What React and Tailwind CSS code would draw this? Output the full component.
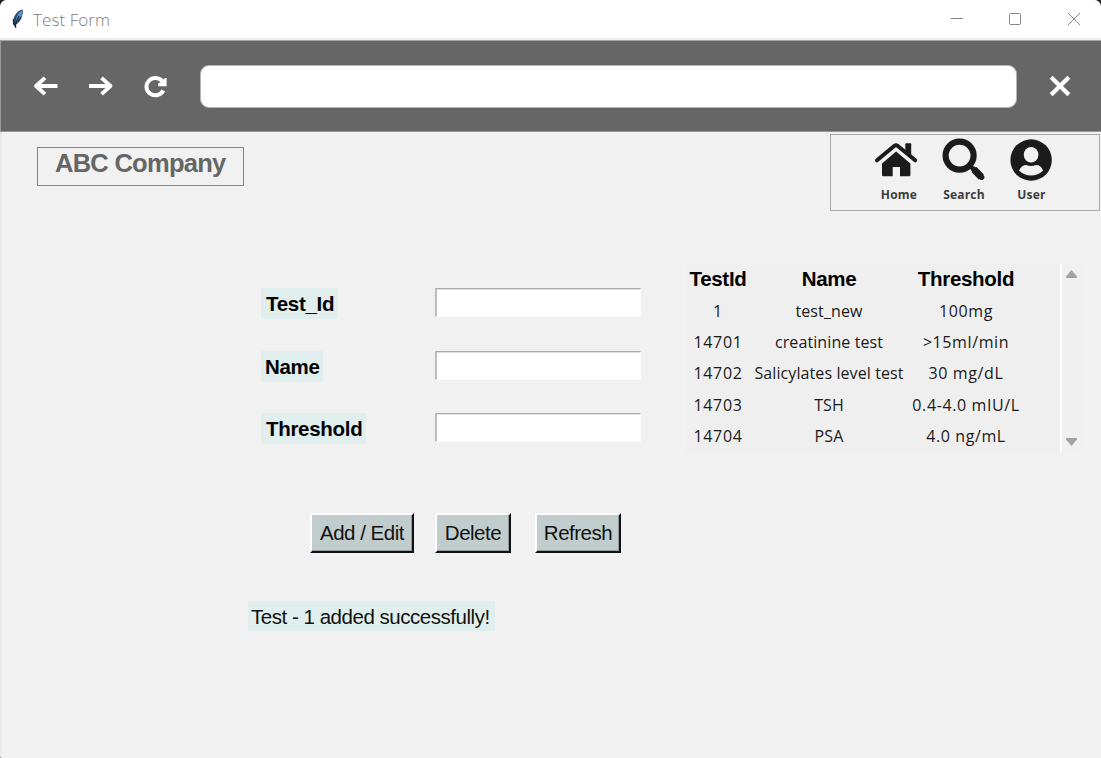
import React from "react";

const arial = "font-['Liberation_Sans',Arial,sans-serif]";
const segoe = "font-['Open_Sans','Noto_Sans',sans-serif]";

function TitleBar() {
  return (
    <header className="flex h-[38px] shrink-0 items-center bg-white">
      <svg className="ml-[11px] h-5 w-[14px]" viewBox="0 0 14 20" fill="none">
        <path d="M2.5 16C1 9 5 2 11.5 0.5C13 4 10 12 6 15L4.5 16L5 19Z" fill="#2c4a6a" />
        <path d="M5 13C5 8 7 3 11 1.5C11.5 7 9.5 11 6.5 14Z" fill="#5592d3" />
        <path d="M4.8 19L4.4 15L8 7M2.3 10L2.5 15.5M10 8L7 13" stroke="#151b25" strokeWidth="1.1" />
      </svg>
      <span className={`${segoe} ml-[8px] pt-[1px] text-[17px] font-light leading-6 text-[#7c7c7c] tracking-[0.08px]`}>Test Form</span>
      <div className="ml-auto flex items-center pr-[20px]">
        <svg className="h-[14px] w-[14px]" viewBox="0 0 14 14" stroke="#858585"><path d="M1 6.5H13" /></svg>
        <svg className="ml-[44px] h-[14px] w-[14px]" viewBox="0 0 14 14" fill="none" stroke="#858585"><rect x="1.5" y="1.5" width="11" height="11" rx="1" /></svg>
        <svg className="ml-[45px] h-[14px] w-[14px]" viewBox="0 0 14 14" stroke="#858585"><path d="M1 1L13 13M13 1L1 13" /></svg>
      </div>
    </header>
  );
}

function Toolbar() {
  return (
    <div className="flex h-[92px] shrink-0 items-center border-y border-l border-b-[#989898] border-l-[#999] border-t-[#a6a6a6] bg-[#666]">
      <svg className="ml-[31px] h-6 w-7" viewBox="0 0 28 24" fill="none" stroke="#fff" strokeWidth="3.8">
        <path d="M25.5 12H4M13 3.8L4 12L13 20.2" strokeLinejoin="round" />
      </svg>
      <svg className="ml-[26px] h-6 w-7" viewBox="0 0 28 24" fill="none" stroke="#fff" strokeWidth="3.8">
        <path d="M3 12H24M15.5 3.8L24.5 12L15.5 20.2" strokeLinejoin="round" />
      </svg>
      <svg className="ml-[28px] h-6 w-[26px]" viewBox="0 0 26 24" fill="none" stroke="#fff">
        <path d="M21.3 16.5A8.9 8.6 0 1 1 20.5 7.5" strokeWidth="4" />
        <path d="M24.6 4V12.2H16V9.5L21 7L22.5 4Z" fill="#fff" stroke="none" />
      </svg>
      <div className="ml-[32px] mt-px h-[43px] w-[817px] rounded-[9px] border border-[#b5b5b5] bg-white" />
      <svg className="ml-[31px] h-6 w-6" viewBox="0 0 24 24" stroke="#fff" strokeWidth="4.2">
        <path d="M3.2 3.2L20.8 20.8M20.8 3.2L3.2 20.8" />
      </svg>
    </div>
  );
}

function HomeIcon() {
  return (
    <svg className="h-[50px] w-[60px]" viewBox="0 0 60 50" fill="#1b1b1b">
      <path d="M9 26.3L26.5 11.8Q28 10.6 29.5 11.8L47.2 26.3" fill="none" stroke="#1b1b1b" strokeWidth="4" strokeLinecap="round" />
      <path d="M37.3 10.2Q37.3 9.3 38.2 9.3H42.3Q43.2 9.3 43.2 10.2V22.5L37.3 17.8Z" />
      <path d="M28.1 17.6L42.4 29.4V41Q42.4 42.3 41.2 42.3H32V33H24.7V42.3H15.3Q14 42.3 14 41V29.4Z" />
    </svg>
  );
}

function SearchIcon() {
  return (
    <svg className="h-[50px] w-[60px]" viewBox="0 0 60 50" fill="none" stroke="#1b1b1b">
      <circle cx="24.6" cy="21.6" r="14" strokeWidth="6.2" />
      <path d="M34 31L38 35" strokeWidth="4" />
      <path d="M39 35.5L46.3 43" strokeWidth="7" />
      <path d="M39 35.5L46.6 43.2" strokeWidth="5.5" strokeLinecap="round" />
    </svg>
  );
}

function UserIcon() {
  return (
    <svg className="h-[50px] w-[60px]" viewBox="0 0 60 50">
      <circle cx="29.1" cy="26" r="20.7" fill="#1b1b1b" />
      <ellipse cx="29.1" cy="20.7" rx="7.3" ry="7.7" fill="#f1f1f1" />
      <path d="M17 36.4Q20 31 24 31Q29 33 34.2 31Q38.5 31 41.2 36.4Q36 41.5 29.1 41.5T17 36.4Z" fill="#f1f1f1" />
    </svg>
  );
}

function Nav() {
  return (
    <nav className="mr-px mt-[2px] flex h-[77px] w-[270px] gap-[7px] border border-[#a9a9a9] pl-[37px] font-['Open_Sans',sans-serif] text-[12px] font-bold leading-4 tracking-[0.2px] text-[#3c3c3c]">
      <div className="-mt-px flex w-[60px] flex-col items-center">
        <HomeIcon />
        <span className="ml-[2px] mt-[3px]">Home</span>
      </div>
      <div className="-mt-px flex w-[60px] flex-col items-center">
        <SearchIcon />
        <span className="mr-[2px] mt-[3px]">Search</span>
      </div>
      <div className="-mt-px flex w-[60px] flex-col items-center">
        <UserIcon />
        <span className="mr-[1px] mt-[3px]">User</span>
      </div>
    </nav>
  );
}

const fields = [
  ["Test_Id", "w-[77px] pl-[5px]"],
  ["Name", "w-[62px] pl-[4px]"],
  ["Threshold", "w-[105px] pl-[5px]"],
];

const buttons = [
  ["Add / Edit", "w-[104px]"],
  ["Delete", "ml-[21px] w-[76px]"],
  ["Refresh", "ml-[24px] w-[86px]"],
];

const rows = [
  ["1", "test_new", "100mg"],
  ["14701", "creatinine test", ">15ml/min"],
  ["14702", "Salicylates level test", "30 mg/dL"],
  ["14703", "TSH", "0.4-4.0 mIU/L"],
  ["14704", "PSA", "4.0 ng/mL"],
];

const cellTracking = ["tracking-[0.65px]", "tracking-[0.1px]", "tracking-[0.6px]"];

function Form() {
  return (
    <section className="ml-[246px] w-[395px] pt-[77px] text-[20.5px]">
      <div className="flex flex-col gap-[31.5px] pl-[13px]">
        {fields.map(([label, size]) => (
          <div key={label} className="flex h-[31px] items-start">
            <div className="w-[174px]">
              <label className={`${size} block h-[31px] bg-[#e0eeed] font-bold leading-[32px] tracking-[-0.3px] text-black`}>{label}</label>
            </div>
            <input aria-label={label} className="h-[29px] w-[206px] border-b border-l-2 border-r border-t border-b-[#fafafa] border-l-[#bcbcbc] border-r-[#fafafa] border-t-[#a8a8a8] bg-white shadow-[inset_0_1px_0_#e2e2e2] outline-none" />
          </div>
        ))}
      </div>
      <div className="mt-[69px] ml-[62px] flex">
        {buttons.map(([label, size]) => (
          <button key={label} className={`${size} h-[40px] whitespace-nowrap border-2 border-b-[#111] border-l-white border-r-[#111] border-t-white bg-[#c1cdcd] pb-[1px] text-center leading-[35px] tracking-[-0.5px] text-[#111] shadow-[inset_-1px_-1px_0_#939d9d]`}>{label}</button>
        ))}
      </div>
      <div className="mt-[48px] h-[30px] w-[247px] whitespace-nowrap bg-[#e0eeed] pl-[3px] leading-[31px] tracking-[-0.47px] text-[#111]">Test - 1 added successfully!</div>
    </section>
  );
}

function ResultTable() {
  return (
    <section className="ml-[43px] mt-[53px] flex h-[188px] w-[396px] bg-[#efefef]">
      <table className={`${segoe} h-[188px] w-[338px] table-fixed border-collapse text-center text-[16px] text-[#1a1a1a]`}>
        <colgroup>
          <col className="w-[64px]" />
          <col className="w-[158px]" />
          <col className="w-[116px]" />
        </colgroup>
        <thead>
          <tr className={`${arial} h-[32px] text-[20.5px] leading-6 tracking-[-0.3px] text-black`}>
            {["TestId", "Name", "Threshold"].map((h) => <th key={h} className="p-0 pb-[3px]">{h}</th>)}
          </tr>
        </thead>
        <tbody>
          {rows.map((r) => (
            <tr key={r[0]} className="h-[31.2px] whitespace-nowrap leading-[24px]">
              {r.map((c, i) => <td key={c} className={`${cellTracking[i]} p-0 pb-px`}>{c}</td>)}
            </tr>
          ))}
        </tbody>
      </table>
      <div className="ml-[36px] flex w-[22px] flex-col items-center justify-between border-l-2 border-white bg-[#f0f0f0] py-[6px] pr-px">
        <svg className="h-2 w-[11px]" viewBox="0 0 11 8"><path d="M5.5 0L11 6.5V8H0V6.5Z" fill="#a3a3a3" /></svg>
        <svg className="h-2 w-[11px]" viewBox="0 0 11 8"><path d="M5.5 8L11 1.5V0H0V1.5Z" fill="#a3a3a3" /></svg>
      </div>
    </section>
  );
}

export default function App() {
  return (
    <div className="h-[758px] w-[1101px] bg-[#222]">
      <div className={`${arial} flex h-full w-full flex-col overflow-hidden rounded-t-[7px] rounded-bl-[2px] bg-[#f1f1f1]`}>
        <TitleBar />
        <div className="h-[2px] shrink-0 bg-[#ededed]" />
        <Toolbar />
        <main className="flex-1 border-l-2 border-[#e9e9e9]">
          <div className="flex h-[79px] items-start justify-between pl-[35px]">
            <h1 className="mt-[15px] h-[39px] w-[207px] whitespace-nowrap border border-[#858585] pl-[17px] text-[25.5px] font-bold leading-[31px] tracking-[-0.73px] text-[#666]">ABC Company</h1>
            <Nav />
          </div>
          <div className="flex items-start">
            <Form />
            <ResultTable />
          </div>
        </main>
      </div>
    </div>
  );
}
